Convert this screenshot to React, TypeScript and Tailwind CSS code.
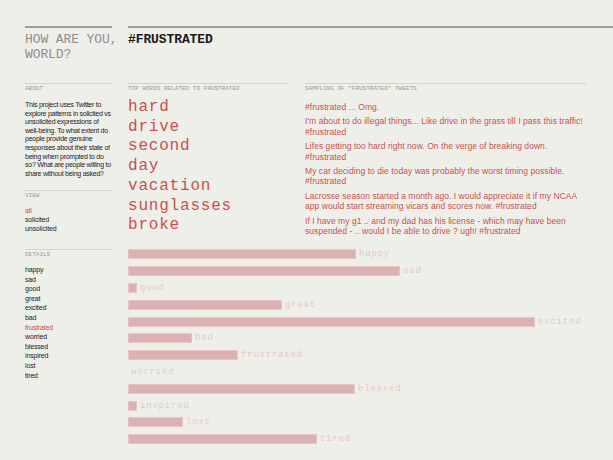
const mono = { fontFamily: '"Liberation Mono", "DejaVu Sans Mono", monospace' };

const topWords = ["hard", "drive", "second", "day", "vacation", "sunglasses", "broke"];

const tweets = [
  "#frustrated ... Omg.",
  "I'm about to do illegal things... Like drive in the grass till I pass this traffic! #frustrated",
  "Lifes getting too hard right now. On the verge of breaking down. #frustrated",
  "My car deciding to die today was probably the worst timing possible. #frustrated",
  "Lacrosse season started a month ago. I would appreciate it if my NCAA app would start streaming vicars and scores now. #frustrated",
  "If I have my g1 .. and my dad has his license - which may have been suspended - .. would I be able to drive ? ugh! #frustrated",
];

const moods = [
  { name: "happy", w: 228 },
  { name: "sad", w: 272 },
  { name: "good", w: 9 },
  { name: "great", w: 154 },
  { name: "excited", w: 407 },
  { name: "bad", w: 64 },
  { name: "frustrated", w: 110 },
  { name: "worried", w: 0 },
  { name: "blessed", w: 227 },
  { name: "inspired", w: 9 },
  { name: "lost", w: 55 },
  { name: "tired", w: 189 },
];

function Label({ children }: { children: React.ReactNode }) {
  return (
    <div className="border-t border-[#d2d2ca] pt-[2px] text-[6px] leading-[6px] uppercase text-[#9a9a94]" style={mono}>
      {children}
    </div>
  );
}

export default function App() {
  return (
    <div
      className="min-h-[460px] w-full bg-[#efefea] pl-[25px] flex gap-[16px] overflow-hidden"
      style={{ fontFamily: '"Liberation Sans", Arial, sans-serif' }}
    >
      {/* sidebar */}
      <div className="w-[87px] shrink-0 pt-[26px]">
        <div className="h-[57px] border-t-2 border-[#9c9c98]">
          <div className="pt-[4px] text-[13px] leading-[15px] tracking-[-0.1px] text-[#8e8e8a] whitespace-nowrap" style={mono}>
            HOW ARE YOU,
            <br />
            WORLD?
          </div>
        </div>
        <div className="h-[107px] w-[86px]">
          <Label>About</Label>
          <p className="mt-[9px] w-[87px] text-[7px] leading-[8.6px] tracking-[-0.25px] text-[#222]">
            This project uses Twitter to explore patterns in solicited vs unsolicited expressions of well-being. To what extent do people provide genuine responses about their state of being when prompted to do so? What are people willing to share without being asked?
          </p>
        </div>
        <div className="h-[59px] w-[86px]">
          <Label>View</Label>
          <ul className="mt-[7px] text-[7px] leading-[9px] tracking-[-0.15px] text-[#222]">
            <li className="text-[#c8504d]">all</li>
            <li>solicited</li>
            <li>unsolicited</li>
          </ul>
        </div>
        <div className="w-[86px]">
          <Label>Details</Label>
          <ul className="mt-[7px] text-[7px] leading-[9.6px] tracking-[-0.15px] text-[#222]">
            {moods.map((m) => (
              <li key={m.name} className={m.name === "frustrated" ? "text-[#c8504d]" : ""}>
                {m.name}
              </li>
            ))}
          </ul>
        </div>
      </div>

      {/* main */}
      <div className="flex-1 pt-[26px]">
        <div className="h-[57px] border-t-2 border-[#9c9c98]">
          <div className="pt-[4px] text-[13px] leading-[15px] tracking-[-0.1px] font-bold text-[#1a1a1a]" style={mono}>
            #FRUSTRATED
          </div>
        </div>
        <div className="h-[163px] flex gap-[17px]">
          <div className="w-[160px]">
            <Label>Top words related to frustrated</Label>
            <ul className="mt-[6px] text-[16px] leading-[19.7px] tracking-[0.8px] text-[#c8504d]" style={mono}>
              {topWords.map((w) => (
                <li key={w}>{w}</li>
              ))}
            </ul>
          </div>
          <div className="w-[281px]">
            <Label>Sampling of "frustrated" tweets</Label>
            <div className="mt-[10px] flex flex-col gap-[4px] text-[8.5px] leading-[10.4px] tracking-[0.05px] text-[#c8504d]">
              {tweets.map((t) => (
                <p key={t}>{t}</p>
              ))}
            </div>
          </div>
        </div>
        <div className="flex flex-col">
          {moods.map((m) => (
            <div key={m.name} className="h-[16.8px] flex items-center">
              {m.w > 0 && (
                <div className="h-[10px] bg-[#dcb1b1] border border-[#e6c6c4]" style={{ width: m.w }} />
              )}
              <span className="ml-[3px] text-[9px] leading-[10px] tracking-[0.8px] text-[#e6c8c4]" style={mono}>
                {m.name}
              </span>
            </div>
          ))}
        </div>
      </div>
    </div>
  );
}
